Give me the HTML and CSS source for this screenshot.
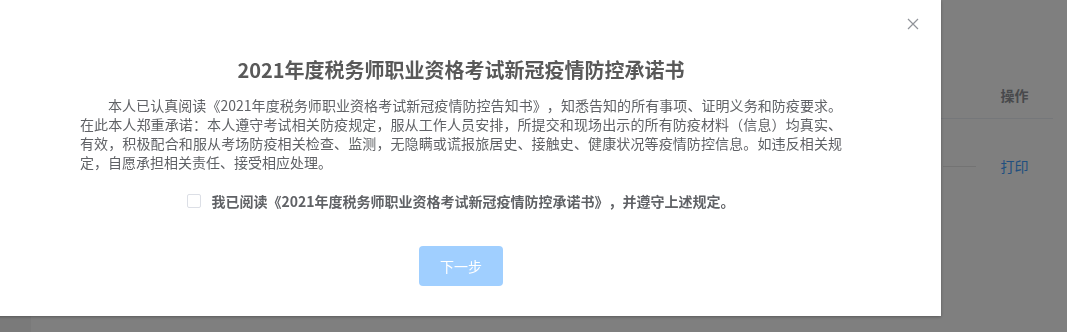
FILE: index.html
```html
<!DOCTYPE html>
<html>
<head>
	<title>承诺书</title>
	<link rel="stylesheet" href="styles.css">
</head>
<body>
	<div class="page">
		<div class="sidebar"></div>
		<div class="main">
			<table class="list">
				<thead>
					<tr>
						<th class="col-info"></th>
						<th class="col-op">操作</th>
					</tr>
				</thead>
				<tbody>
					<tr>
						<td class="col-info"><div class="split"></div></td>
						<td class="col-op"><a href="#" class="link">打印</a></td>
					</tr>
				</tbody>
			</table>
		</div>
	</div>

	<div class="mask">
		<div class="dialog">
			<button class="close" aria-label="关闭">
				<svg width="12" height="12" viewBox="0 0 12 12">
					<path d="M1 1 L11 11 M11 1 L1 11" stroke="#909399" stroke-width="1.2" fill="none"/>
				</svg>
			</button>
			<h2 class="title">2021年度税务师职业资格考试新冠疫情防控承诺书</h2>
			<p class="content">本人已认真阅读《2021年度税务师职业资格考试新冠疫情防控告知书》，知悉告知的所有事项、证明义务和防疫要求。在此本人郑重承诺：本人遵守考试相关防疫规定，服从工作人员安排，所提交和现场出示的所有防疫材料（信息）均真实、<span class="keep">有效，</span>积极配合和服从考场防疫相关检查、监测，无隐瞒或谎报旅居史、接触史、健康状况等疫情防控信息。如违反相关规定，自愿承担相关责任、接受相应处理。</p>
			<label class="agree">
				<span class="box"></span>
				<span class="agree-text">我已阅读《2021年度税务师职业资格考试新冠疫情防控承诺书》，并遵守上述规定。</span>
			</label>
			<div class="footer">
				<button class="next" disabled>下一步</button>
			</div>
		</div>
	</div>
</body>
</html>
```

FILE: styles.css
```css
body {
	margin: 0;
	padding: 0;
	width: 1067px;
	height: 332px;
	overflow: hidden;
	font-family: "Noto Sans CJK SC", "Noto Sans", sans-serif;
	text-spacing-trim: space-all;
	background-color: #fff;
}

.page {
	display: flex;
	height: 332px;
}

.sidebar {
	width: 31px;
	background-color: #f4f4f4;
}

.main {
	flex: 1;
	padding: 72px 14px 0 0;
	display: flex;
	justify-content: flex-end;
}

.list {
	border-collapse: collapse;
	height: 141px;
	font-size: 14px;
}

.list th {
	height: 46px;
	padding: 0;
	color: #909399;
	font-weight: bold;
	border-bottom: 1px solid #ebeef5;
}

.list td {
	height: 94px;
	padding: 0;
}

.col-info {
	width: 200px;
}

.col-op {
	width: 77px;
	text-align: center;
}

.split {
	margin-left: 167px;
	width: 33px;
	border-top: 1px solid #e6e6e6;
}

.link {
	color: #409eff;
	text-decoration: none;
}

/* dialog */
.mask {
	position: fixed;
	inset: 0;
	background-color: rgba(0, 0, 0, 0.5);
}

.dialog {
	position: relative;
	margin-left: -19px;
	width: 960px;
	box-sizing: border-box;
	padding: 56px 0 30px;
	background-color: #fff;
	box-shadow: 0 1px 3px rgba(0, 0, 0, 0.3);
	display: flex;
	flex-direction: column;
	align-items: center;
}

.close {
	position: absolute;
	top: 18px;
	right: 22px;
	padding: 0;
	border: none;
	background: none;
	line-height: 0;
	cursor: pointer;
}

.title {
	margin: 0;
	font-size: 20px;
	line-height: 28px;
	font-weight: bold;
	color: #595959;
}

.content {
	margin: 12px 0 0;
	width: 762px;
	font-size: 14px;
	line-height: 19px;
	color: #606266;
	text-indent: 2em;
	text-align: justify;
}

.keep {
	white-space: nowrap;
}

.agree {
	margin-top: 19px;
	display: flex;
	align-items: center;
	gap: 10px;
	height: 20px;
	cursor: pointer;
}

.box {
	width: 12px;
	height: 12px;
	border: 1px solid #dcdfe6;
	border-radius: 2px;
	background-color: #fff;
}

.agree-text {
	font-size: 14px;
	font-weight: bold;
	color: #606266;
}

.footer {
	margin-top: 35px;
}

.next {
	width: 84px;
	height: 40px;
	border: none;
	border-radius: 4px;
	background-color: #a0cfff;
	color: #fff;
	font-family: inherit;
	font-size: 14px;
}
```
